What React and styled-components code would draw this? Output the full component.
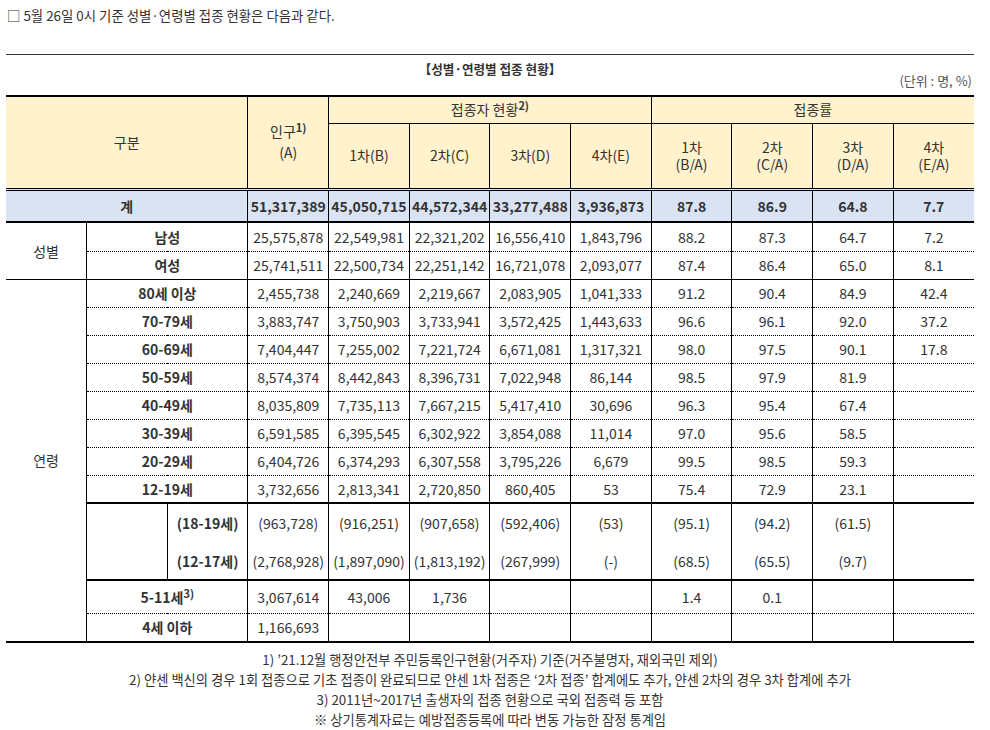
import React from "react";
import styled, { createGlobalStyle } from "styled-components";

const GlobalStyle = createGlobalStyle`
  body {
    margin: 0;
    background: #fff;
    font-family: "Noto Sans CJK KR", "Noto Sans", sans-serif;
    color: #333;
  }
`;

const genderRows = [
  ["남성", "25,575,878", "22,549,981", "22,321,202", "16,556,410", "1,843,796", "88.2", "87.3", "64.7", "7.2"],
  ["여성", "25,741,511", "22,500,734", "22,251,142", "16,721,078", "2,093,077", "87.4", "86.4", "65.0", "8.1"],
];

const ageRows = [
  ["80세 이상", "2,455,738", "2,240,669", "2,219,667", "2,083,905", "1,041,333", "91.2", "90.4", "84.9", "42.4"],
  ["70-79세", "3,883,747", "3,750,903", "3,733,941", "3,572,425", "1,443,633", "96.6", "96.1", "92.0", "37.2"],
  ["60-69세", "7,404,447", "7,255,002", "7,221,724", "6,671,081", "1,317,321", "98.0", "97.5", "90.1", "17.8"],
  ["50-59세", "8,574,374", "8,442,843", "8,396,731", "7,022,948", "86,144", "98.5", "97.9", "81.9", ""],
  ["40-49세", "8,035,809", "7,735,113", "7,667,215", "5,417,410", "30,696", "96.3", "95.4", "67.4", ""],
  ["30-39세", "6,591,585", "6,395,545", "6,302,922", "3,854,088", "11,014", "97.0", "95.6", "58.5", ""],
  ["20-29세", "6,404,726", "6,374,293", "6,307,558", "3,795,226", "6,679", "99.5", "98.5", "59.3", ""],
  ["12-19세", "3,732,656", "2,813,341", "2,720,850", "860,405", "53", "75.4", "72.9", "23.1", ""],
];

const subRows = [
  ["(18-19세)", "(963,728)", "(916,251)", "(907,658)", "(592,406)", "(53)", "(95.1)", "(94.2)", "(61.5)", ""],
  ["(12-17세)", "(2,768,928)", "(1,897,090)", "(1,813,192)", "(267,999)", "(-)", "(68.5)", "(65.5)", "(9.7)", ""],
];

const lines = {
  none: "none",
  dotted: "1px dotted #000",
  solid: "1px solid #000",
  thick: "2px solid #000",
};

const Page = styled.div`
  width: 968px;
  padding: 4px 0 0 6px;
`;

const Intro = styled.p`
  margin: 0 0 0 1px;
  font-size: 13.4px;
  line-height: 22px;
  color: #333;
`;

const Rule = styled.hr`
  margin: 28px 0 0;
  border: 0;
  border-top: 1px solid #333;
`;

const Caption = styled.div`
  display: grid;
  grid-template-columns: 1fr auto 1fr;
  height: 33px;
  padding-top: 7px;
`;

const Title = styled.div`
  grid-column: 2;
  align-self: start;
  font-size: 12.6px;
  font-weight: 700;
  line-height: 14px;
  color: #333;
`;

const Unit = styled.div`
  grid-column: 3;
  justify-self: end;
  align-self: end;
  margin: 0 2px 7px 0;
  font-size: 13px;
  line-height: 14px;
  color: #555;
`;

const Table = styled.table`
  width: 968px;
  border-collapse: collapse;
  table-layout: fixed;
  border-top: 2px solid #000;
  border-bottom: 2px solid #000;
  font-size: 14px;
  color: #333;
`;

const HeadRow = styled.tr`
  height: ${(p) => p.$h}px;
`;

const Head = styled.th`
  padding: 0;
  background: #fff2cc;
  font-weight: 400;
  text-align: center;
  vertical-align: middle;
  line-height: ${(p) => (p.$tight ? "17px" : "21px")};
  border-right: ${(p) => (p.$last ? "none" : "1px solid #000")};
  border-bottom: ${(p) => (p.$double ? "3px double #000" : "1px solid #000")};
`;

const Row = styled.tr`
  height: ${(p) => p.$h}px;
  background: ${(p) => p.$bg || "transparent"};
  & > td {
    border-top: ${(p) => lines[p.$line || "none"]};
  }
`;

const Cell = styled.td`
  padding: 0;
  text-align: center;
  vertical-align: middle;
  white-space: nowrap;
  line-height: 20px;
  font-weight: ${(p) => (p.$bold ? 700 : 400)};
  border-right: ${(p) => (p.$last ? "none" : "1px solid #000")};
  border-bottom: ${(p) => (p.$total ? "2px solid #000" : "none")};
`;

const Sup = styled.sup`
  font-size: 11px;
  font-weight: 700;
  line-height: 0;
  vertical-align: 5px;
`;

const Notes = styled.div`
  margin-top: 7px;
  text-align: center;
  font-size: 13.3px;
  line-height: 20px;
  color: #333;
`;

function Values({ values, bold, total }) {
  return values.map((v, i) => (
    <Cell key={i} $bold={bold} $total={total} $last={i === values.length - 1}>
      {v}
    </Cell>
  ));
}

export default function App() {
  return (
    <Page>
      <GlobalStyle />
      <Intro>□ 5월 26일 0시 기준 성별·연령별 접종 현황은 다음과 같다.</Intro>
      <Rule />
      <Caption>
        <Title>【성별·연령별 접종 현황】</Title>
        <Unit>(단위 : 명, %)</Unit>
      </Caption>

      <Table>
        <colgroup>
          {Array.from({ length: 12 }, (_, i) => (
            <col key={i} />
          ))}
        </colgroup>
        <thead>
          <HeadRow $h={27}>
            <Head colSpan={3} rowSpan={2} $double>
              구분
            </Head>
            <Head rowSpan={2} $double>
              인구<Sup>1)</Sup>
              <br />
              (A)
            </Head>
            <Head colSpan={4}>
              접종자 현황<Sup>2)</Sup>
            </Head>
            <Head colSpan={4} $last>
              접종률
            </Head>
          </HeadRow>
          <HeadRow $h={66}>
            <Head $double>1차(B)</Head>
            <Head $double>2차(C)</Head>
            <Head $double>3차(D)</Head>
            <Head $double>4차(E)</Head>
            <Head $double $tight>
              1차
              <br />
              (B/A)
            </Head>
            <Head $double $tight>
              2차
              <br />
              (C/A)
            </Head>
            <Head $double $tight>
              3차
              <br />
              (D/A)
            </Head>
            <Head $double $tight $last>
              4차
              <br />
              (E/A)
            </Head>
          </HeadRow>
        </thead>
        <tbody>
          <Row $h={33} $bg="#dae3f3">
            <Cell colSpan={3} $bold $total>
              계
            </Cell>
            <Values
              bold
              total
              values={["51,317,389", "45,050,715", "44,572,344", "33,277,488", "3,936,873", "87.8", "86.9", "64.8", "7.7"]}
            />
          </Row>

          {genderRows.map(([label, ...values], i) => (
            <Row key={label} $h={i === 0 ? 29 : 28} $line={i === 0 ? "none" : "dotted"}>
              {i === 0 && <Cell rowSpan={2}>성별</Cell>}
              <Cell colSpan={2} $bold>
                {label}
              </Cell>
              <Values values={values} />
            </Row>
          ))}

          {ageRows.map(([label, ...values], i) => (
            <Row key={label} $h={28} $line={i === 0 ? "solid" : "dotted"}>
              {i === 0 && <Cell rowSpan={12}>연령</Cell>}
              <Cell colSpan={2} $bold>
                {label}
              </Cell>
              <Values values={values} />
            </Row>
          ))}

          {subRows.map(([label, ...values], i) => (
            <Row key={label} $h={i === 0 ? 39 : 38} $line={i === 0 ? "thick" : "none"}>
              {i === 0 && <Cell rowSpan={2} />}
              <Cell $bold>{label}</Cell>
              <Values values={values} />
            </Row>
          ))}

          <Row $h={33} $line="thick">
            <Cell colSpan={2} $bold>
              5-11세<Sup>3)</Sup>
            </Cell>
            <Values values={["3,067,614", "43,006", "1,736", "", "", "1.4", "0.1", "", ""]} />
          </Row>
          <Row $h={29} $line="dotted">
            <Cell colSpan={2} $bold>
              4세 이하
            </Cell>
            <Values values={["1,166,693", "", "", "", "", "", "", "", ""]} />
          </Row>
        </tbody>
      </Table>

      <Notes>
        <div>1) ’21.12월 행정안전부 주민등록인구현황(거주자) 기준(거주불명자, 재외국민 제외)</div>
        <div>2) 얀센 백신의 경우 1회 접종으로 기초 접종이 완료되므로 얀센 1차 접종은 ‘2차 접종’ 합계에도 추가, 얀센 2차의 경우 3차 합계에 추가</div>
        <div>3) 2011년~2017년 출생자의 접종 현황으로 국외 접종력 등 포함</div>
        <div>※ 상기통계자료는 예방접종등록에 따라 변동 가능한 잠정 통계임</div>
      </Notes>
    </Page>
  );
}
